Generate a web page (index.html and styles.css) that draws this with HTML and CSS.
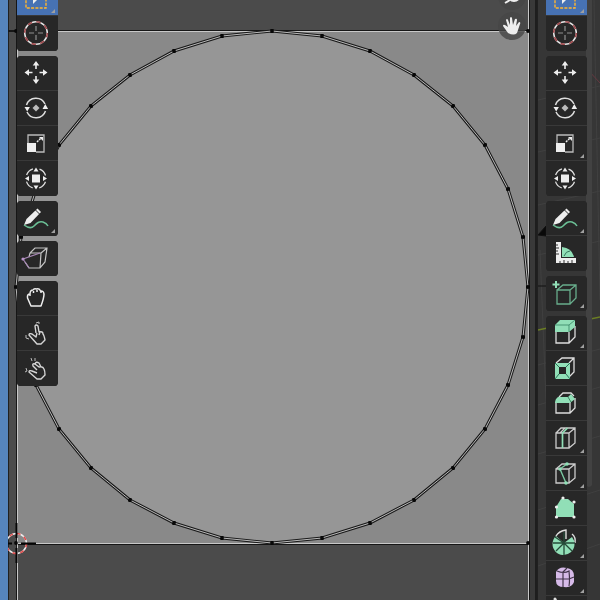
FILE: index.html
```html
<!DOCTYPE html>
<html lang="en">
<head>
<meta charset="utf-8">
<title>UV Editor</title>
<link rel="stylesheet" href="styles.css">
</head>
<body>
<svg class="defs" aria-hidden="true">
  <defs>
    <symbol id="select" viewBox="0 0 40 35"><path d="M9 3h20v24H9z" fill="none" stroke="#ffb62e" stroke-width="1.4" stroke-dasharray="3 1.3"/><path d="M16 9v14l4-4 6-1z" fill="#eee"/></symbol>
    <symbol id="cursor" viewBox="0 0 40 35"><circle cx="19" cy="17" r="11.3" fill="none" stroke="#e4e4e4" stroke-width="1.5"/><circle cx="19" cy="17" r="11.3" fill="none" stroke="#a0484c" stroke-width="1.6" stroke-dasharray="4.4 4.475"/><path d="M19 10v5M19 19v5M12 17h5M21 17h5" stroke="#909090" stroke-width="1.2"/></symbol>
    <symbol id="move" viewBox="0 0 40 35"><path d="M19 5l3.3 4.5h-6.6zM19 28l3.3-4.5h-6.6zM7.5 16.500l4.500-3.300v6.600zM30.500 16.500l-4.500-3.300v6.600z" fill="#eee"/><path d="M19 9v4M19 20v4M12 16.500h3.500M22.500 16.500h3.500" stroke="#eee" stroke-width="1.600"/></symbol>
    <symbol id="rotate" viewBox="0 0 40 35"><path d="M9.500 14a10 10 0 0 1 18.500-1M28.500 20a10 10 0 0 1-18.500 1" fill="none" stroke="#ddd" stroke-width="1.500"/><path d="M7.500 16h5.400l-2.700 4.500zM25.500 18h5.600l-2.800-5z" fill="#eee"/><path d="M19 13.500l3.500 3.500-3.500 3.500-3.500-3.500z" fill="#bbb"/></symbol>
    <symbol id="scale" viewBox="0 0 40 35"><path d="M11 17V9h16v17h-8" fill="none" stroke="#bbb" stroke-width="1.300"/><path d="M10 17h9v9h-9z" fill="#eee"/><path d="M20 16l4-4" stroke="#eee" stroke-width="1.500" stroke-dasharray="2 1"/><path d="M22 11h4v4z" fill="#eee"/></symbol>
    <symbol id="transform" viewBox="0 0 40 35"><circle cx="19" cy="17.500" r="10" fill="none" stroke="#ddd" stroke-width="1.300" stroke-dasharray="9 6.700" stroke-dashoffset="-3.300"/><path d="M15 13.500h8v8h-8z" fill="#eee"/><path d="M19 6.500l2.500 4h-5zM19 28.500l2.500-4h-5zM8 17.500l4-2.500v5zM30 17.500l-4-2.500v5z" fill="#eee"/></symbol>
    <symbol id="annotate" viewBox="0 0 40 35"><path d="M7 24l2.500-6L20.500 7.500 24 11 13.500 22z" fill="#eee"/><path d="M18.500 9l4 4" stroke="#292929"/><path d="M7 24c4 3 7 4 10 1s5-5 9-4c3 1 4 2 5 4" fill="none" stroke="#6bbf95" stroke-width="1.500"/></symbol>
    <symbol id="rip" viewBox="0 0 40 35"><path d="M13 12l5-5h12l-2 14-5 6H12l-4-6M13 12h11M24 12l-1 15M24 12l6-5M13 12l-1 4" fill="none" stroke="#c4c4c4" stroke-width="1.200"/><path d="M6 18l17-6M6 18l6 9" stroke="#a787b5" stroke-width="1.200"/><circle cx="6" cy="18" r="1.600" fill="#b894c8"/></symbol>
    <symbol id="grab" viewBox="0 0 40 35"><path d="M14 25l-3.500-8q-.5-4 2.500-4 0-4 3-4 1-2 3.500-1 3-1 4 2 3-.5 3.500 3 0 4-3 12zM13 13v2M16.500 10v2M20 9v2M24 10v2" fill="none" stroke="#eee" stroke-width="1.500" stroke-linejoin="round"/></symbol>
    <symbol id="relax" viewBox="0 0 40 35"><path d="M19 17l-1-7q1-2 3 0l1 6q4-1 4 2 1 1 2 6l-4 4h-4l-8-9q0-2 3-1l4 3 1-4M23 16l-1 3" fill="none" stroke="#d5d5d5" stroke-width="1.400" stroke-linejoin="round"/><path d="M9 19v3l3 1M19 7l3-1v2" fill="none" stroke="#bbb"/></symbol>
    <symbol id="pinch" viewBox="0 0 40 35"><path d="M20 19l-4-4q-1-3 2-2l4 3q4-1 5 2 1 2 1 6l-4 4h-4l-8-7q0-2 3-1l5 2M18 13q1-3 4-1l2 4" fill="none" stroke="#d5d5d5" stroke-width="1.400" stroke-linejoin="round"/><path d="M9 17l1 3-2 1M14 7l1 3M18 7v3" fill="none" stroke="#bbb"/></symbol>
    <symbol id="measure" viewBox="0 0 40 35"><path d="M10 6h5v16h15v5H10z" fill="#eee"/><path d="M16 21V11q10 1 12 10z" fill="#91dfb7"/><path d="M18 20q2-5 6-5" fill="none" stroke="#35745a"/><path d="M10 9h2M10 12h3M10 15h2M10 18h3M14 27v-2M18 27v-3M22 27v-2M26 27v-3" stroke="#333"/></symbol>
    <symbol id="addcube" viewBox="0 0 40 35"><path d="M11 14h13v14H11zl6-5h13v13l-6 6M24 14l6-5" fill="none" stroke="#68ad8c" stroke-width="1.300"/><path d="M10 5v7M6.500 8.500h7" stroke="#91dfb7" stroke-width="2"/></symbol>
    <symbol id="extrude" viewBox="0 0 40 35"><path d="M10 16v11h13l6-6V10M23 16v11" fill="none" stroke="#ddd" stroke-width="1.300"/><path d="M9 9l5-5h15v7l-6 5H9z" fill="#91dfb7"/><path d="M9 9h14l6-5M23 9v7" fill="none" stroke="#287557" stroke-width=".7"/></symbol>
    <symbol id="inset" viewBox="0 0 40 35"><path d="M10 12l6-5h12v14l-6 6M23 12l5-5" fill="none" stroke="#ddd" stroke-width="1.300"/><path d="M9 12h15v16H9z" fill="#91dfb7"/><path d="M13 16h7v7h-7z" fill="#252525"/><path d="M9 12l4 4M24 12l-4 4M9 28l4-5M24 28l-4-5" stroke="#287557"/></symbol>
    <symbol id="bevel" viewBox="0 0 40 35"><path d="M10 16v11h14l5-5V12M24 16v11M13 11l4-4h8l3 3" fill="none" stroke="#ddd" stroke-width="1.300"/><path d="M9 17q0-4 3-6h10l3-3 4 5-5 4z" fill="#91dfb7"/><path d="M22 11l3 5" stroke="#3c8262"/></symbol>
    <symbol id="loop" viewBox="0 0 40 35"><path d="M10 12h13v15H10zl5-5h14v15l-6 5M23 12l6-5M14 12l5-5" fill="none" stroke="#ccc" stroke-width="1.300"/><path d="M16.500 27V12l5-5" fill="none" stroke="#91dfb7" stroke-width="1.700"/></symbol>
    <symbol id="knife" viewBox="0 0 40 35"><path d="M10 13h13v14H10zl6-5h13v14l-6 5M23 13l6-5" fill="none" stroke="#ccc" stroke-width="1.300"/><path d="M21 8l-7 5 6 14" fill="none" stroke="#79c8a0" stroke-width="1.400"/><g fill="#91dfb7"><circle cx="21" cy="8" r="1.800"/><circle cx="14" cy="13" r="1.800"/><circle cx="20" cy="27" r="1.800"/></g></symbol>
    <symbol id="poly" viewBox="0 0 40 35"><path d="M10 26V16l5-8h7l6 5v13z" fill="#91dfb7"/><g fill="#eee"><circle cx="10.500" cy="26" r="1.600"/><circle cx="10.500" cy="16" r="1.600"/><circle cx="17" cy="7" r="1.600"/><circle cx="28" cy="11" r="1.600"/><circle cx="28" cy="26" r="1.600"/></g></symbol>
    <symbol id="spin" viewBox="0 0 40 35"><path d="M18 17l-8-7a11 11 0 1 0 16 1z" fill="#91dfb7"/><path d="M10 10q3-5 10-6v9M26 8q4 3 3 9" fill="none" stroke="#ddd" stroke-width="1.400"/><path d="M18 17V6M18 17l-9-6M7 17h22M18 17v12M18 17l-8 8M18 17l8 8" stroke="#254b39" stroke-width="1.300"/></symbol>
    <symbol id="smooth" viewBox="0 0 40 35"><path d="M10 11q3-6 11-4 7 1 7 8v6q-2 6-10 5-8 0-8-6z" fill="#d6bae8"/><path d="M10 18h13l5-2M17 26V11l4-4M11 10q7 3 12 0 1 10 0 15" fill="none" stroke="#413449" stroke-width="1.200"/></symbol>
    <symbol id="slide" viewBox="0 0 40 35"><circle cx="9" cy="3" r="1.500" fill="#ddd"/><path d="M9 3l5 3v20H9z" fill="none" stroke="#ddd"/></symbol>
    <symbol id="hand" viewBox="0 0 28 28"><path d="M10 21l-5-7q0-2 2-1l3 2-2-7q1-2 2 0l2 5V6q1-2 2 0l1 7 2-6q2-1 2 1l-1 6 3-4q2 0 1 2l-3 9q-3 3-9 0z" fill="#eee"/></symbol>
    <marker id="vertex" markerWidth="4" markerHeight="4" refX="2" refY="2" markerUnits="userSpaceOnUse"><circle cx="2" cy="2" r="1.900" fill="#080808"/></marker>
    <path id="ring" d="M528 287L523 337 508 385 485 429 453 468 414 500 370 523 322 538 272 543 222 538 174 523 130 500 91 468 59 429 36 385 21 337 16 287 21 237 36 189 59 145 91 106 130 75 174 51 222 36 272 31 322 36 370 51 414 75 453 106 485 145 508 189 523 237Z" marker-start="url(#vertex)" marker-mid="url(#vertex)"/>
  </defs>
</svg>
<main class="workspace">
  <div class="edge"></div>
  <section class="uv-editor" aria-label="UV Editor">
    <svg class="canvas" viewBox="8 0 529 600" preserveAspectRatio="xMinYMin slice" aria-hidden="true">
      <path d="M8 0h529v600H8z" fill="#4b4b4b"/>
      <path d="M17 31h512v512H17z" fill="#898989"/>
      <use href="#ring" fill="#969696"/>
      <path d="M530 0h5v600h-5z" fill="#393939"/>
      <path d="M535 0h2v600h-2z" fill="#1e1e1e"/>
      <path d="M8 0v600" stroke="#202020" stroke-width="2"/>
      <path d="M17 0v600M529 0v600M8 31h521M17 544h512" stroke="#161616" stroke-width="2"/>
      <path d="M17.500 0v600M528.500 0v600M17 31.500h511M17 543.500h511" stroke="#c8c8c8"/>
      <use href="#ring" fill="none" stroke="#191919" stroke-width="3"/>
      <use href="#ring" fill="none" stroke="#bbb"/>
      <path d="M528 31V543H16V31" fill="none" marker-start="url(#vertex)" marker-mid="url(#vertex)" marker-end="url(#vertex)"/>
      <circle cx="16.500" cy="543.500" r="10" fill="none" stroke="#eee" stroke-width="1.500"/>
      <circle cx="16.500" cy="543.500" r="10" fill="none" stroke="#e04a4a" stroke-width="1.500" stroke-dasharray="3.900 3.950"/>
      <path d="M16.500 523v15M16.500 548v15M8 543.500h4M21 543.500h15" stroke="#050505" stroke-width="2"/>
    </svg>
    <nav class="toolbar" aria-label="UV tools">
      <div class="group">
        <button class="tool active more" aria-label="Select"><svg><use href="#select"/></svg></button>
        <button class="tool" aria-label="Cursor"><svg><use href="#cursor"/></svg></button>
      </div>
      <div class="group">
        <button class="tool" aria-label="Move"><svg><use href="#move"/></svg></button>
        <button class="tool" aria-label="Rotate"><svg><use href="#rotate"/></svg></button>
        <button class="tool" aria-label="Scale"><svg><use href="#scale"/></svg></button>
        <button class="tool" aria-label="Transform"><svg><use href="#transform"/></svg></button>
      </div>
      <div class="group"><button class="tool more" aria-label="Annotate"><svg><use href="#annotate"/></svg></button></div>
      <div class="group"><button class="tool" aria-label="Rip region"><svg><use href="#rip"/></svg></button></div>
      <div class="group">
        <button class="tool" aria-label="Grab"><svg><use href="#grab"/></svg></button>
        <button class="tool" aria-label="Relax"><svg><use href="#relax"/></svg></button>
        <button class="tool" aria-label="Pinch"><svg><use href="#pinch"/></svg></button>
      </div>
    </nav>
    <div class="gizmos">
      <button class="gizmo" aria-label="Zoom"><svg viewBox="0 0 28 28"><circle cx="16" cy="13" r="6" fill="none" stroke="#eee" stroke-width="2"/><path d="M12 18l-5 3" stroke="#eee" stroke-width="2"/></svg></button>
      <button class="gizmo" aria-label="Pan"><svg><use href="#hand"/></svg></button>
    </div>
  </section>
  <section class="viewport" aria-label="3D Viewport">
    <svg class="canvas" viewBox="537 0 63 600" preserveAspectRatio="xMinYMin slice" aria-hidden="true">
      <path d="M537 0h63v600h-63z" fill="#363636"/>
      <g stroke="#404040"><path d="M538 100l62-14M538 152l62-14M538 205l62-14M538 255l62-14M538 365l62-16M538 405l62-18M538 454l62-18M538 510l62-20M538 566l62-22M594 0l6 300M540 250l14 350"/></g>
      <path d="M588 70l12 13" stroke="#653941"/>
      <path d="M538 330l62-13" stroke="#6b7d24" stroke-width="1.500"/>
      <path d="M538 235l8-9v10zM538 286h8" fill="#090909" stroke="#111"/>
      <path d="M586 0h6v485q-3 4-6 0z" fill="#424242"/>
      <path d="M537 0h1v600h-1z" fill="#202020"/>
    </svg>
    <nav class="toolbar" aria-label="Mesh tools">
      <div class="group">
        <button class="tool active more" aria-label="Select box"><svg><use href="#select"/></svg></button>
        <button class="tool" aria-label="3D cursor"><svg><use href="#cursor"/></svg></button>
      </div>
      <div class="group">
        <button class="tool" aria-label="Move"><svg><use href="#move"/></svg></button>
        <button class="tool" aria-label="Rotate"><svg><use href="#rotate"/></svg></button>
        <button class="tool more" aria-label="Scale"><svg><use href="#scale"/></svg></button>
        <button class="tool" aria-label="Transform"><svg><use href="#transform"/></svg></button>
      </div>
      <div class="group">
        <button class="tool more" aria-label="Annotate"><svg><use href="#annotate"/></svg></button>
        <button class="tool" aria-label="Measure"><svg><use href="#measure"/></svg></button>
      </div>
      <div class="group"><button class="tool more" aria-label="Add cube"><svg><use href="#addcube"/></svg></button></div>
      <div class="group">
        <button class="tool more" aria-label="Extrude"><svg><use href="#extrude"/></svg></button>
        <button class="tool" aria-label="Inset faces"><svg><use href="#inset"/></svg></button>
        <button class="tool" aria-label="Bevel"><svg><use href="#bevel"/></svg></button>
        <button class="tool more" aria-label="Loop cut"><svg><use href="#loop"/></svg></button>
        <button class="tool more" aria-label="Knife"><svg><use href="#knife"/></svg></button>
        <button class="tool" aria-label="Poly build"><svg><use href="#poly"/></svg></button>
        <button class="tool more" aria-label="Spin"><svg><use href="#spin"/></svg></button>
        <button class="tool more" aria-label="Smooth"><svg><use href="#smooth"/></svg></button>
        <button class="tool" aria-label="Edge slide"><svg><use href="#slide"/></svg></button>
      </div>
    </nav>
  </section>
</main>
</body>
</html>
```
FILE: styles.css
```css
body {
  margin: 0;
  background: #4b4b4b;
}

.defs {
  position: absolute;
  width: 0;
  height: 0;
}

.workspace {
  display: grid;
  grid-template-columns: 8px 1fr 63px;
  height: 100vh;
  overflow: hidden;
}

.edge {
  background: #5685bd;
}

.uv-editor,
.viewport {
  position: relative;
  overflow: hidden;
}

.canvas {
  display: block;
  width: 100%;
  height: 100%;
}

.toolbar {
  position: absolute;
  top: -19px;
  left: 9px;
  display: flex;
  flex-direction: column;
  gap: 5px;
}

.group {
  border-radius: 4px;
  overflow: hidden;
  background: #272727;
}

.tool {
  position: relative;
  display: block;
  box-sizing: border-box;
  width: 41px;
  height: 35px;
  padding: 0;
  border: 0;
  border-bottom: 1px solid #393939;
  background: #272727;
}

.tool:last-child {
  border-bottom-color: #272727;
}

.tool.active {
  background: #4772b3;
}

.tool svg {
  display: block;
  width: 40px;
  height: 35px;
}

.tool.more::after {
  content: "";
  position: absolute;
  right: 3px;
  bottom: 2px;
  border-left: 4px solid transparent;
  border-bottom: 4px solid #a0a0a0;
}

.gizmos {
  position: absolute;
  top: -18px;
  right: 11px;
  display: flex;
  flex-direction: column;
  gap: 2px;
}

.gizmo {
  width: 28px;
  height: 28px;
  padding: 0;
  border: 0;
  border-radius: 50%;
  background: rgba(70, 70, 70, 0.8);
}

.gizmo svg {
  display: block;
  width: 28px;
  height: 28px;
}
```
